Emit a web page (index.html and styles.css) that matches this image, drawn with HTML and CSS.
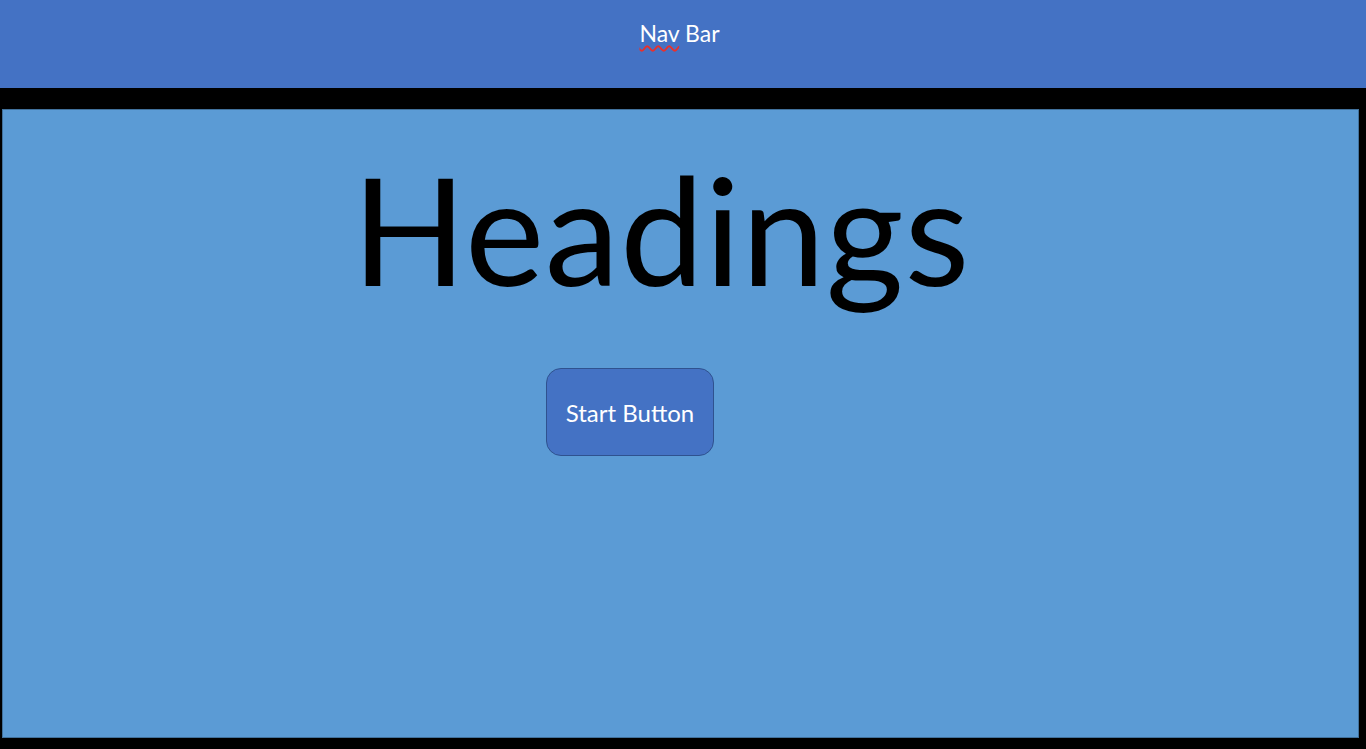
FILE: index.html
```html
<!DOCTYPE html>
<html>
<head>
<meta charset="utf-8">
<link rel="stylesheet" href="styles.css">
</head>
<body>
<header class="navbar"><span class="nav-title"><span class="misspelled">Nav</span> Bar</span></header>
<main class="hero">
  <h1 class="heading">Headings</h1>
  <button class="start-btn">Start Button</button>
</main>
</body>
</html>
```
FILE: styles.css
```css
html, body {
  margin: 0;
  padding: 0;
  background: #000;
  height: 749px;
  overflow: hidden;
  font-family: Lato, "Open Sans", sans-serif;
}
.navbar {
  height: 88px;
  background: #4472c4;
  display: flex;
  justify-content: center;
  align-items: flex-start;
  box-sizing: border-box;
  padding-right: 7px;
}
.nav-title {
  color: #fff;
  font-size: 23px;
  line-height: 23px;
  margin-top: 22px;
}
.misspelled {
  text-decoration-line: underline;
  text-decoration-style: wavy;
  text-decoration-color: #e8302c;
  text-decoration-thickness: 1.5px;
  text-underline-offset: 3px;
}
.hero {
  margin: 21px 0 0 2px;
  width: 1357px;
  height: 629px;
  box-sizing: border-box;
  background: #5b9bd5;
  border: 1px solid #41719c;
  display: flex;
  flex-direction: column;
  align-items: flex-start;
}
.heading {
  margin: 43px 0 0 349px;
  font-weight: 400;
  font-size: 150px;
  line-height: 150px;
  letter-spacing: 0.7px;
  color: #000;
}
.start-btn {
  margin: 65px 0 0 543px;
  width: 168px;
  height: 88px;
  background: #4472c4;
  border: 1px solid #2f528f;
  border-radius: 15px;
  color: #fff;
  font-family: Lato, "Open Sans", sans-serif;
  font-size: 24px;
  padding: 0;
}
```
